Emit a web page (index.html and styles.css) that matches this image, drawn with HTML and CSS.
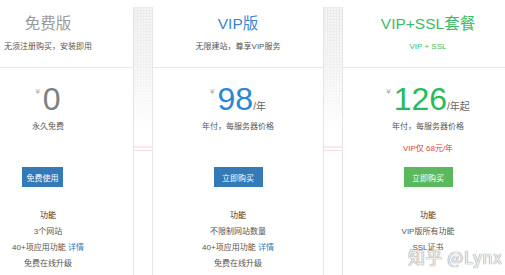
FILE: index.html
```html
<!DOCTYPE html>
<html lang="zh">
<head>
<meta charset="utf-8">
<link rel="stylesheet" href="styles.css">
</head>
<body>
<div class="page">
  <div class="plan free">
    <div class="head">
      <div class="title">免费版</div>
      <div class="sub">无须注册购买，安装即用</div>
    </div>
    <div class="body">
      <div class="priceblock">
        <div class="price"><span class="yen">¥</span><span class="num">0</span></div>
        <div class="note">永久免费</div>
      </div>
      <div class="btnrow"><span class="btn b1">免费使用</span></div>
      <div class="feat">
        <div class="fh">功能</div>
        <div>3个网站</div>
        <div>40+项应用功能 <span class="link">详情</span></div>
        <div>免费在线升级</div>
      </div>
    </div>
  </div>
  <div class="gutter"></div>
  <div class="plan vip">
    <div class="head">
      <div class="title">VIP版</div>
      <div class="sub">无限建站，尊享VIP服务</div>
    </div>
    <div class="body">
      <div class="priceblock">
        <div class="price"><span class="yen">¥</span><span class="num">98</span><span class="unit">/年</span></div>
        <div class="note">年付，每服务器价格</div>
      </div>
      <div class="btnrow"><span class="btn b2">立即购买</span></div>
      <div class="feat">
        <div class="fh">功能</div>
        <div>不限制网站数量</div>
        <div>40+项应用功能 <span class="link">详情</span></div>
        <div>免费在线升级</div>
      </div>
    </div>
  </div>
  <div class="gutter"></div>
  <div class="plan ssl">
    <div class="head">
      <div class="title">VIP+SSL套餐</div>
      <div class="sub">VIP + SSL</div>
    </div>
    <div class="body">
      <div class="priceblock">
        <div class="price"><span class="yen">¥</span><span class="num">126</span><span class="unit">/年起</span></div>
        <div class="note">年付，每服务器价格</div>
        <div class="red">VIP仅 68元/年</div>
      </div>
      <div class="btnrow"><span class="btn b3">立即购买</span></div>
      <div class="feat">
        <div class="fh">功能</div>
        <div>VIP版所有功能</div>
        <div>SSL证书</div>
      </div>
    </div>
  </div>
</div>
<div class="wm">知乎 @Lynx</div>
</body>
</html>
```
FILE: styles.css
```css
html, body {
  margin: 0;
  padding: 0;
  background: #fff;
  overflow: hidden;
  width: 505px;
  height: 275px;
}
body {
  font-family: "Liberation Sans", "Noto Sans CJK SC", sans-serif;
  color: #666;
  position: relative;
}
.page {
  display: grid;
  grid-template-columns: 170px 20px 170px 20px 170px;
  margin-left: -37px;
  height: 275px;
}
.plan {
  text-align: center;
}
.head {
  border-bottom: 1px solid #e8e8e8;
  box-sizing: border-box;
  height: 68px;
}
.title {
  padding-top: 14px;
  font-size: 15.5px;
  line-height: 20px;
}
.free .title { color: #9a9a9a; }
.vip .title { color: #3b87d3; }
.ssl .title { color: #3cbb68; }
.sub {
  margin-top: 7px;
  font-size: 8px;
  line-height: 12px;
  color: #555;
}
.ssl .sub { color: #3cbb68; }
.body {
  padding-top: 15px;
}
.priceblock {
  height: 84px;
}
.price {
  height: 32px;
  line-height: 32px;
  white-space: nowrap;
}
.yen {
  font-size: 8px;
  color: #aaa;
  vertical-align: top;
  line-height: 18px;
  margin-right: 3px;
}
.num {
  font-size: 32px;
}
.free .num { color: #808080; }
.vip .num { color: #2a86d6; }
.ssl .num { color: #26bd58; }
.unit {
  font-size: 10px;
  color: #666;
}
.note {
  margin-top: 5px;
  font-size: 8px;
  line-height: 14px;
  color: #555;
}
.red {
  margin-top: 8px;
  font-size: 8px;
  line-height: 14px;
  color: #e43c3c;
}
.btnrow {
  height: 20px;
  display: flex;
  justify-content: center;
}
.btn {
  display: flex;
  align-items: center;
  justify-content: center;
  height: 20px;
  font-size: 8px;
  color: #fff;
  background: #337ab7;
}
.b1 { width: 41px; margin-right: 11px; }
.b2 { width: 49px; }
.b3 { width: 49px; background: #5cb85c; }
.feat {
  margin-top: 21px;
  font-size: 8px;
  line-height: 16px;
  color: #555;
}
.fh {
  color: #333;
}
.link { color: #337ab7; }
.gutter {
  margin-top: 7px;
  border-left: 1px solid #e6e6e6;
  border-right: 1px solid #e6e6e6;
  background:
    linear-gradient(to bottom, rgba(255,255,255,0) 0px, rgba(255,255,255,0.3) 60px, rgba(255,255,255,1) 125px, #fff 139px, #fbe7e7 139px, #fbe7e7 141px, #fff 141px, #fff 143px, #f7dede 143px, #f7dede 144px, #fff 144px),
    repeating-linear-gradient(to right, #ebebeb 0 1px, transparent 1px 3px),
    repeating-linear-gradient(to bottom, #ebebeb 0 1px, transparent 1px 3px),
    #f4f4f4;
}
.wm {
  position: absolute;
  left: 408px;
  top: 245px;
  font-family: "Noto Sans CJK SC", "Liberation Sans", sans-serif;
  font-size: 17px;
  line-height: 24px;
  color: rgba(255,255,255,0.9);
  text-shadow: 0 0 1px #888, 0 0 1px #888;
  letter-spacing: 0.5px;
}
```
